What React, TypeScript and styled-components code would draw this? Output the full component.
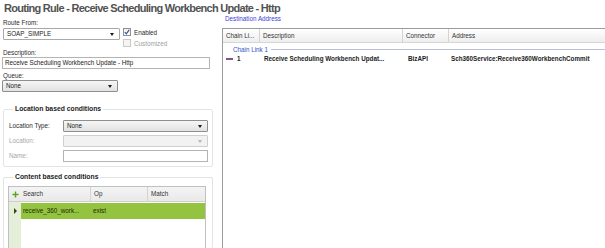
import React from 'react'
import styled, { createGlobalStyle, css } from 'styled-components'

const GlobalStyle = createGlobalStyle`
  html, body {
    margin: 0;
    padding: 0;
    background: #fff;
    overflow: hidden;
  }
  body {
    font-family: 'Liberation Sans', Arial, sans-serif;
    font-size: 6.3px;
    color: #222;
  }
`

const Page = styled.div`
  width: 605px;
  height: 248px;
  display: flex;
  flex-direction: column;
  overflow: hidden;
`

const Title = styled.h1`
  margin: 0;
  padding: 2px 0 0 4px;
  height: 14px;
  box-sizing: border-box;
  font-size: 11px;
  line-height: 13px;
  font-weight: 700;
  letter-spacing: -0.72px;
  color: #525252;
  white-space: nowrap;
`

const Body = styled.div`
  flex: 1;
  min-height: 0;
  display: flex;
`

const LeftPane = styled.div`
  width: 215px;
  flex: none;
  display: flex;
  flex-direction: column;
  padding: 5px 0 0 2px;
  box-sizing: border-box;
`

const Label = styled.div<{ $gap?: number; $muted?: boolean }>`
  line-height: 8px;
  height: 8px;
  padding-left: 1px;
  margin-top: ${p => p.$gap ?? 0}px;
  color: ${p => (p.$muted ? '#a8a8a8' : '#2a2a2a')};
  white-space: nowrap;
`

const RouteRow = styled.div`
  display: flex;
  gap: 3px;
  margin-top: 1px;
  padding-left: 1px;
`

const ChecksColumn = styled.div`
  display: flex;
  flex-direction: column;
  gap: 3px;
  height: 21px;
`

const CheckRow = styled.label<{ $disabled?: boolean }>`
  display: flex;
  align-items: center;
  gap: 3px;
  height: 8px;
  color: ${p => (p.$disabled ? '#a0a0a0' : '#2a2a2a')};
`

const Box = styled.span<{ $disabled?: boolean }>`
  width: 8px;
  height: 8px;
  box-sizing: border-box;
  border: 1px solid ${p => (p.$disabled ? '#cacaca' : '#8e8f8f')};
  background: ${p => (p.$disabled ? '#f4f4f4' : 'linear-gradient(#f0f0f0, #fff)')};
  display: flex;
  align-items: center;
  justify-content: center;
`

const comboVariants = {
  white: css`
    background: #fff;
    border-color: #a9a9a9;
  `,
  grey: css`
    background: linear-gradient(#f6f6f6, #e2e2e2);
    border-color: #8f8f8f;
  `,
  disabled: css`
    background: #f2f2f2;
    border-color: #cfcfcf;
  `,
}

const Combo = styled.div<{ $width?: number; $variant: keyof typeof comboVariants }>`
  position: relative;
  width: ${p => (p.$width ? `${p.$width}px` : '100%')};
  height: 12px;
  box-sizing: border-box;
  border: 1px solid;
  border-radius: 1px;
  padding-left: 3px;
  line-height: 10px;
  color: #222;
  ${p => comboVariants[p.$variant]}

  &::after {
    content: '';
    position: absolute;
    right: 5px;
    top: 4px;
    border-left: 2.5px solid transparent;
    border-right: 2.5px solid transparent;
    border-top: 3px solid ${p => (p.$variant === 'disabled' ? '#b5b5b5' : '#1a1a1a')};
  }
`

const TextInput = styled.div<{ $width?: number }>`
  width: ${p => (p.$width ? `${p.$width}px` : '100%')};
  height: 12px;
  box-sizing: border-box;
  border: 1px solid #b4b4b4;
  background: #fff;
  padding-left: 2px;
  line-height: 10px;
  color: #222;
  white-space: nowrap;
`

const Group = styled.fieldset<{ $gap: number; $grow?: boolean }>`
  margin: ${p => p.$gap}px 2px 0 1px;
  padding: ${p => (p.$grow ? '5px 5px 0 4px' : '7px 4px 4px 4px')};
  border: 1px solid #e3e3e3;
  border-radius: 2px;
  min-width: 0;
  ${p =>
    p.$grow &&
    css`
      flex: 1;
      border-bottom: none;
      display: flex;
      flex-direction: column;
    `}
`

const Legend = styled.legend`
  margin-left: 5px;
  padding: 0 2px;
  font-size: 6.8px;
  line-height: 8px;
  font-weight: 700;
  color: #1c1c1c;
`

const FormGrid = styled.div`
  display: grid;
  grid-template-columns: 55px 1fr;
  row-gap: 3px;
  align-items: center;
`

const LeftGrid = styled.div`
  flex: 1;
  display: flex;
  flex-direction: column;
  border: 1px solid #c0c0c0;
  border-bottom: none;
  margin-right: 1px;
  background: linear-gradient(to right, #e5eed8 12px, #fff 12px);
`

const LeftGridRow = styled.div<{ $head?: boolean; $selected?: boolean }>`
  display: grid;
  grid-template-columns: 12px 69px 57px 1fr;
  height: ${p => (p.$head ? 14 : 16)}px;
  line-height: ${p => (p.$head ? 14 : 16)}px;
  ${p =>
    p.$head &&
    css`
      background: linear-gradient(#f4f4f4, #e9e9e9);
      border-bottom: 1px solid #cfcfcf;
      color: #333;
    `}
  ${p =>
    p.$selected &&
    css`
      margin-top: 1px;
      background: linear-gradient(to right, #e5eed8 12px, #93c33f 12px);
      color: #1a2a08;
    `}
`

const Cell = styled.div<{ $sep?: boolean; $pad?: number; $bold?: boolean }>`
  padding-left: ${p => p.$pad ?? 3}px;
  overflow: hidden;
  white-space: nowrap;
  font-weight: ${p => (p.$bold ? 700 : 400)};
  border-left: ${p => (p.$sep ? '1px solid #d4d4d4' : 'none')};
`

const Plus = styled.span`
  display: flex;
  align-items: center;
  justify-content: center;
  height: 100%;
`

const Marker = styled.span`
  display: flex;
  align-items: center;
  justify-content: center;
  height: 100%;

  &::before {
    content: '';
    border-top: 3px solid transparent;
    border-bottom: 3px solid transparent;
    border-left: 3px solid #2f4a12;
  }
`

const RightPane = styled.div`
  flex: 1;
  min-width: 0;
  display: flex;
  flex-direction: column;
  padding-left: 7px;
`

const DestLink = styled.div`
  padding-left: 3px;
  line-height: 8px;
  height: 8px;
  margin-top: 1px;
  color: #3d3dd8;
  white-space: nowrap;
`

const DestGrid = styled.div`
  flex: 1;
  margin: 5px -3px 0 0;
  border: 1px solid #9c9c9c;
  border-bottom: none;
  display: flex;
  flex-direction: column;
`

const DestRow = styled.div<{ $head?: boolean }>`
  display: grid;
  grid-template-columns: 36px 143px 46px 1fr;
  height: ${p => (p.$head ? 13 : 10)}px;
  line-height: ${p => (p.$head ? 13 : 10)}px;
  ${p =>
    p.$head &&
    css`
      background: linear-gradient(#ffffff, #eeeeee);
      border-bottom: 1px solid #d6d6d6;
      color: #333;
    `}
`

const ChainGroup = styled.div`
  display: flex;
  align-items: center;
  gap: 3px;
  height: 9px;
  margin-top: 2px;
  padding-left: 10px;
  color: #3552c4;
  white-space: nowrap;

  &::after {
    content: '';
    flex: 1;
    height: 1px;
    background: #b9c0d8;
  }
`

const Dash = styled.span`
  display: inline-block;
  width: 7px;
  height: 2px;
  background: #8b4f8b;
  margin: 0 4px 1px 3px;
  vertical-align: middle;
`

const Check = () => (
  <svg width="6" height="6" viewBox="0 0 6 6">
    <path d="M0.8 3.2 L2.3 4.8 L5.2 0.9" fill="none" stroke="#2c4f9e" strokeWidth="1.1" />
  </svg>
)

const PlusIcon = () => (
  <svg width="7" height="7" viewBox="0 0 7 7">
    <path d="M3.5 0.5 V6.5 M0.5 3.5 H6.5" stroke="#5aa41e" strokeWidth="1.4" />
  </svg>
)

export default function App() {
  return (
    <>
      <GlobalStyle />
      <Page>
        <Title>Routing Rule - Receive Scheduling Workbench Update - Http</Title>
        <Body>
          <LeftPane>
            <Label>Route From:</Label>
            <RouteRow>
              <Combo $variant="white" $width={117}>SOAP_SIMPLE</Combo>
              <ChecksColumn>
                <CheckRow>
                  <Box>
                    <Check />
                  </Box>
                  Enabled
                </CheckRow>
                <CheckRow $disabled>
                  <Box $disabled />
                  Customized
                </CheckRow>
              </ChecksColumn>
            </RouteRow>
            <Label>Description:</Label>
            <TextInput $width={208}>Receive Scheduling Workbench Update - Http</TextInput>
            <Label $gap={3}>Queue:</Label>
            <Combo $variant="grey" $width={116}>None</Combo>

            <Group $gap={13}>
              <Legend>Location based conditions</Legend>
              <FormGrid>
                <Label>Location Type:</Label>
                <Combo $variant="grey">None</Combo>
                <Label $muted>Location:</Label>
                <Combo $variant="disabled" />
                <Label $muted>Name:</Label>
                <TextInput />
              </FormGrid>
            </Group>

            <Group $gap={6} $grow>
              <Legend>Content based conditions</Legend>
              <LeftGrid>
                <LeftGridRow $head>
                  <Plus>
                    <PlusIcon />
                  </Plus>
                  <Cell $pad={2}>Search</Cell>
                  <Cell $sep>Op</Cell>
                  <Cell $sep>Match</Cell>
                </LeftGridRow>
                <LeftGridRow $selected>
                  <Marker />
                  <Cell $pad={2}>receive_360_work...</Cell>
                  <Cell>exist</Cell>
                  <Cell />
                </LeftGridRow>
              </LeftGrid>
            </Group>
          </LeftPane>

          <RightPane>
            <DestLink>Destination Address</DestLink>
            <DestGrid>
              <DestRow $head>
                <Cell $pad={3}>Chain Li...</Cell>
                <Cell $sep>Description</Cell>
                <Cell $sep>Connector</Cell>
                <Cell $sep>Address</Cell>
              </DestRow>
              <ChainGroup>Chain Link 1</ChainGroup>
              <DestRow>
                <Cell $pad={0} $bold>
                  <Dash />1
                </Cell>
                <Cell $pad={5} $bold>Receive Scheduling Workbench Updat...</Cell>
                <Cell $pad={6} $bold>BizAPI</Cell>
                <Cell $pad={3} $bold>Sch360Service:Receive360WorkbenchCommit</Cell>
              </DestRow>
            </DestGrid>
          </RightPane>
        </Body>
      </Page>
    </>
  )
}
